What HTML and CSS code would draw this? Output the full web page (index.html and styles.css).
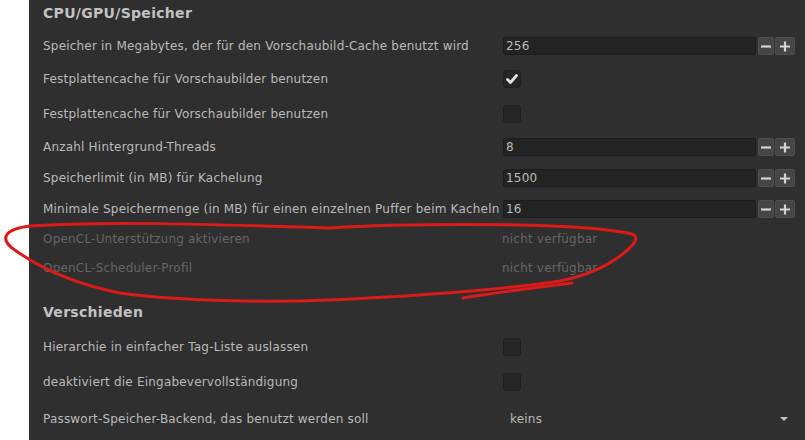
FILE: index.html
```html
<!DOCTYPE html>
<html lang="de">
<head>
<meta charset="utf-8">
<title>Einstellungen</title>
<link rel="stylesheet" href="styles.css">
</head>
<body>
<div class="page">
  <div class="gutter"></div>
  <div class="panel">
    <h2 class="section first">CPU/GPU/Speicher</h2>

    <div class="row spin-row">
      <span class="label">Speicher in Megabytes, der für den Vorschaubild-Cache benutzt wird</span>
      <div class="spin"><span class="field">256</span><span class="btn minus"><svg viewBox="0 0 16 18" width="16" height="18"><path d="M3 9.5h10" /></svg></span><span class="btn plus"><svg viewBox="0 0 18 18" width="18" height="18"><path d="M4 9.5h10M9 4.5v10" /></svg></span></div>
    </div>

    <div class="row check-row">
      <span class="label">Festplattencache für Vorschaubilder benutzen</span>
      <span class="check on"><svg viewBox="0 0 18 18" width="18" height="18"><path d="M4.5 9.5l3 3 6-7" /></svg></span>
    </div>

    <div class="row check-row">
      <span class="label">Festplattencache für Vorschaubilder benutzen</span>
      <span class="check"></span>
    </div>

    <div class="row spin-row">
      <span class="label">Anzahl Hintergrund-Threads</span>
      <div class="spin"><span class="field">8</span><span class="btn minus"><svg viewBox="0 0 16 18" width="16" height="18"><path d="M3 9.5h10" /></svg></span><span class="btn plus"><svg viewBox="0 0 18 18" width="18" height="18"><path d="M4 9.5h10M9 4.5v10" /></svg></span></div>
    </div>

    <div class="row spin-row">
      <span class="label">Speicherlimit (in MB) für Kachelung</span>
      <div class="spin"><span class="field">1500</span><span class="btn minus"><svg viewBox="0 0 16 18" width="16" height="18"><path d="M3 9.5h10" /></svg></span><span class="btn plus"><svg viewBox="0 0 18 18" width="18" height="18"><path d="M4 9.5h10M9 4.5v10" /></svg></span></div>
    </div>

    <div class="row spin-row">
      <span class="label">Minimale Speichermenge (in MB) für einen einzelnen Puffer beim Kacheln</span>
      <div class="spin"><span class="field">16</span><span class="btn minus"><svg viewBox="0 0 16 18" width="16" height="18"><path d="M3 9.5h10" /></svg></span><span class="btn plus"><svg viewBox="0 0 18 18" width="18" height="18"><path d="M4 9.5h10M9 4.5v10" /></svg></span></div>
    </div>

    <div class="row text-row disabled">
      <span class="label">OpenCL-Unterstützung aktivieren</span>
      <span class="value">nicht verfügbar</span>
    </div>

    <div class="row text-row disabled">
      <span class="label">OpenCL-Scheduler-Profil</span>
      <span class="value">nicht verfügbar</span>
    </div>

    <h2 class="section second">Verschieden</h2>

    <div class="row check-row">
      <span class="label">Hierarchie in einfacher Tag-Liste auslassen</span>
      <span class="check"></span>
    </div>

    <div class="row check-row">
      <span class="label">deaktiviert die Eingabevervollständigung</span>
      <span class="check"></span>
    </div>

    <div class="row combo-row">
      <span class="label">Passwort-Speicher-Backend, das benutzt werden soll</span>
      <div class="combo"><span class="combo-text">keins</span><span class="arrow"></span></div>
    </div>
  </div>

  <svg class="annotation" viewBox="0 0 805 440" width="805" height="440">
    <path d="M330 228 C380 225, 450 224, 520 225 C570 226, 610 229, 632 234 C640 237, 634 245, 625 252 C610 265, 590 275, 560 281 C500 290, 420 296, 330 300 C250 303, 170 300, 120 293 C70 283, 35 265, 12 248 C0 238, 5 229, 30 226 C100 221, 200 224, 330 228 Z" />
    <path d="M463 298 C500 292, 540 287, 572 283" />
  </svg>
</div>
</body>
</html>
```

FILE: styles.css
```css
* {
  box-sizing: border-box;
}

html, body {
  margin: 0;
  padding: 0;
  background: #ffffff;
}

body {
  font-family: "DejaVu Sans", "Liberation Sans", sans-serif;
  font-size: 12px;
  letter-spacing: 0.2px;
  color: #bababa;
}

.page {
  position: relative;
  display: flex;
  width: 805px;
  height: 440px;
  overflow: hidden;
}

.gutter {
  width: 29px;
  flex: none;
  background: #ffffff;
}

.panel {
  flex: 1;
  background: #2f2f2f;
  padding: 0 10px 0 14px;
  display: flex;
  flex-direction: column;
}

.section {
  margin: 0;
  height: 30px;
  padding-bottom: 4px;
  display: flex;
  align-items: center;
  font-size: 14px;
  font-weight: bold;
  color: #c2c2c2;
  letter-spacing: 0.3px;
}

.section.second {
  margin-top: 17px;
}

.row {
  display: grid;
  grid-template-columns: 460px 1fr;
  align-items: center;
}

.spin-row { height: 31px; }
.check-row { height: 35px; }
.text-row { height: 29px; }
.combo-row { height: 40px; }

.label {
  white-space: nowrap;
}

.disabled .label,
.disabled .value {
  color: #666666;
}

.value {
  margin-left: -1px;
}

.spin {
  display: flex;
  height: 18px;
  gap: 1px;
}

.field {
  flex: 1;
  background: #232323;
  border: 1px solid #1d1d1d;
  border-radius: 2px;
  padding-left: 2px;
  line-height: 16px;
  color: #bcbcbc;
  margin-right: 1px;
}

.btn {
  display: block;
  height: 18px;
  background: #454545;
  border: 1px solid #4e4e4e;
  border-radius: 2px;
}

.btn svg {
  display: block;
  margin: -1px;
}

.btn.minus { width: 16px; }
.btn.plus { width: 20px; }

.btn.plus svg { margin-left: 0; }

.btn path {
  stroke: #d4d4d4;
  stroke-width: 2.2;
  fill: none;
}

.check {
  display: block;
  width: 18px;
  height: 18px;
  background: #262626;
  border: 1px solid #1f1f1f;
  border-radius: 3px;
}

.check svg {
  display: block;
  margin: -1px;
}

.check path {
  stroke: #e2e2e2;
  stroke-width: 2.8;
  fill: none;
  stroke-linecap: round;
  stroke-linejoin: round;
}

.combo {
  display: flex;
  align-items: center;
  justify-content: space-between;
  padding-left: 7px;
  padding-right: 7px;
}

.combo-text {
  color: #b8b8b8;
}

.arrow {
  width: 0;
  height: 0;
  border-left: 4px solid transparent;
  border-right: 4px solid transparent;
  border-top: 4px solid #c0c0c0;
}

.annotation {
  position: absolute;
  left: 0;
  top: 0;
  pointer-events: none;
}

.annotation path {
  fill: none;
  stroke: #db1a1a;
  stroke-width: 3;
  stroke-linecap: round;
  stroke-linejoin: round;
}
```
